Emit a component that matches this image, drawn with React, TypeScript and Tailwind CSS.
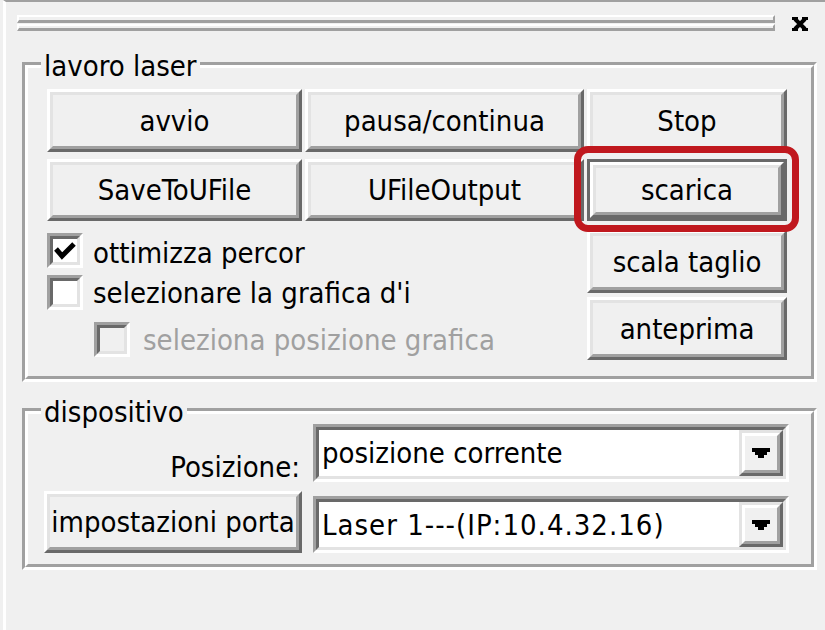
import React from "react";

const font = "font-['DejaVu_Sans_Condensed','DejaVu_Sans',sans-serif] font-stretch-condensed";

type BtnProps = { label: string; className?: string; def?: boolean };

const Btn = ({ label, className = "", def = false }: BtnProps) => {
  const face = (
    <div className="h-full border-[3px] border-t-white border-l-white border-r-[#696969] border-b-[#696969]">
      <div className="h-full flex items-center justify-center border-[3px] border-t-[#e3e3e3] border-l-[#e3e3e3] border-r-[#a0a0a0] border-b-[#a0a0a0] bg-[#f0f0f0] text-[29px] leading-[30px] text-black whitespace-nowrap">
        {label}
      </div>
    </div>
  );
  if (def) {
    return <div className={`border-[3px] border-[#696969] ${className}`}>{face}</div>;
  }
  return <div className={className}>{face}</div>;
};

const Group = ({ title, className = "", children }: { title: string; className?: string; children: React.ReactNode }) => (
  <div className={`relative border-[3px] border-t-[#a0a0a0] border-l-[#a0a0a0] border-r-white border-b-white ${className}`}>
    <div className="h-full border-[3px] border-t-white border-l-white border-r-[#a0a0a0] border-b-[#a0a0a0]">
      {children}
    </div>
    <span className="absolute left-[16px] top-[-14px] bg-[#f0f0f0] px-[3px] text-[29px] leading-[30px] text-black">
      {title}
    </span>
  </div>
);

const Check = ({ checked = false, disabled = false }: { checked?: boolean; disabled?: boolean }) => (
  <div className="w-[36px] h-[35px] shrink-0 border-[3px] border-t-[#a0a0a0] border-l-[#a0a0a0] border-r-white border-b-white">
    <div
      className={`h-full flex items-center justify-center border-[3px] border-t-[#696969] border-l-[#696969] border-r-[#e3e3e3] border-b-[#e3e3e3] ${
        disabled ? "bg-[#f0f0f0]" : "bg-white"
      }`}
    >
      {checked && (
        <svg width="22" height="18" viewBox="0 0 22 18">
          <path d="M2 7 L8 14 L20 2" stroke="#000" strokeWidth="5" fill="none" />
        </svg>
      )}
    </div>
  </div>
);

const Arrow = () => (
  <svg width="18" height="10" viewBox="0 0 18 10">
    <path d="M0 0 H18 V4 H15 V7 H12 V10 H6 V7 H3 V4 H0 Z" fill="#000" />
  </svg>
);

const Combo = ({ value, className = "", track = "" }: { value: string; className?: string; track?: string }) => (
  <div className={`border-[3px] border-t-[#a0a0a0] border-l-[#a0a0a0] border-r-white border-b-white ${className}`}>
    <div className="h-full flex bg-white border-[3px] border-t-[#696969] border-l-[#696969] border-r-[#e3e3e3] border-b-[#e3e3e3]">
      <div className={`flex-1 flex items-center pl-[3px] text-[29px] leading-[30px] text-black whitespace-nowrap ${track}`}>{value}</div>
      <div className="w-[44px] h-full border-[3px] border-t-[#e3e3e3] border-l-[#e3e3e3] border-r-[#696969] border-b-[#696969]">
        <div className="h-full flex items-center justify-center bg-[#f0f0f0] border-[3px] border-t-white border-l-white border-r-[#a0a0a0] border-b-[#a0a0a0]">
          <Arrow />
        </div>
      </div>
    </div>
  </div>
);

const App = () => {
  return (
    <div className={`w-[825px] h-[630px] overflow-hidden bg-[#f0f0f0] pl-[3px] ${font}`}>
      <div className="h-full border-l-[3px] border-l-white border-t-2 border-t-[#a0a0a0]">
        {/* grip + close */}
        <div className="flex items-start mt-[13px] ml-[11px]">
          <div className="w-[758px] flex flex-col">
            <div className="h-[8px] border-t-2 border-t-white border-l-2 border-l-white border-b-[3px] border-b-[#a0a0a0] border-r-2 border-r-[#a0a0a0]" />
            <div className="h-[7px] mt-[1px] border-t-2 border-t-white border-l-2 border-l-white border-b-[3px] border-b-[#a0a0a0] border-r-2 border-r-[#a0a0a0]" />
          </div>
          <svg className="ml-[17px] mt-[2px]" width="16" height="14" viewBox="0 0 16 14">
            <path d="M3 2 L13 12 M13 2 L3 12" stroke="#000" strokeWidth="4" />
            <rect x="0" y="0" width="6" height="3" fill="#000" />
            <rect x="10" y="0" width="6" height="3" fill="#000" />
            <rect x="0" y="11" width="6" height="3" fill="#000" />
            <rect x="10" y="11" width="6" height="3" fill="#000" />
          </svg>
        </div>

        {/* lavoro laser */}
        <Group title="lavoro laser" className="mt-[31px] ml-[16px] w-[795px] h-[320px]">
          <div className="pl-[19px] pt-[21px]">
            <div className="flex gap-[3px]">
              <Btn label="avvio" className="w-[255px] h-[63px]" />
              <Btn label="pausa/continua" className="w-[279px] h-[63px]" />
              <Btn label="Stop" className="w-[200px] h-[63px]" />
            </div>
            <div className="flex gap-[3px] mt-[7px]">
              <Btn label="SaveToUFile" className="w-[255px] h-[62px]" />
              <Btn label="UFileOutput" className="w-[279px] h-[62px]" />
              <Btn label="scarica" def className="w-[200px] h-[62px]" />
            </div>
            <div className="flex">
              <div className="w-[540px] flex flex-col pt-[12px]">
                <div className="flex items-center gap-[10px] h-[35px]">
                  <Check checked />
                  <span className="text-[29px] leading-[30px] text-black mt-[4px]">ottimizza percor</span>
                </div>
                <div className="flex items-center gap-[10px] h-[35px] mt-[7px]">
                  <Check />
                  <span className="text-[29px] leading-[30px] text-black">selezionare la grafica d'i</span>
                </div>
                <div className="flex items-center gap-[13px] h-[35px] mt-[12px] ml-[47px]">
                  <Check disabled />
                  <span className="text-[29px] leading-[30px] text-[#a0a0a0]">seleziona posizione grafica</span>
                </div>
              </div>
              <div className="w-[200px] flex flex-col pt-[9px] gap-[4px]">
                <Btn label="scala taglio" className="h-[63px]" />
                <Btn label="anteprima" className="h-[63px]" />
              </div>
            </div>
          </div>
          <div className="absolute left-[549px] top-[81px] w-[225px] h-[86px] border-[7px] border-[#c0181e] rounded-[14px]" />
        </Group>

        {/* dispositivo */}
        <Group title="dispositivo" className="mt-[26px] ml-[16px] w-[795px] h-[162px]">
          <div className="pt-[10px]">
            <div className="flex items-start">
              <div className="w-[285px] flex justify-end pr-[13px] pt-[28px]">
                <span className="text-[29px] leading-[30px] text-black">Posizione:</span>
              </div>
              <Combo value="posizione corrente" className="w-[476px] h-[58px]" />
            </div>
            <div className="flex items-end mt-[9px]">
              <Btn label="impostazioni porta" className="ml-[16px] w-[258px] h-[62px]" />
              <Combo value="Laser 1---(IP:10.4.32.16)" track="tracking-[1px]" className="ml-[11px] w-[476px] h-[57px]" />
            </div>
          </div>
        </Group>
      </div>
    </div>
  );
};

export default App;
